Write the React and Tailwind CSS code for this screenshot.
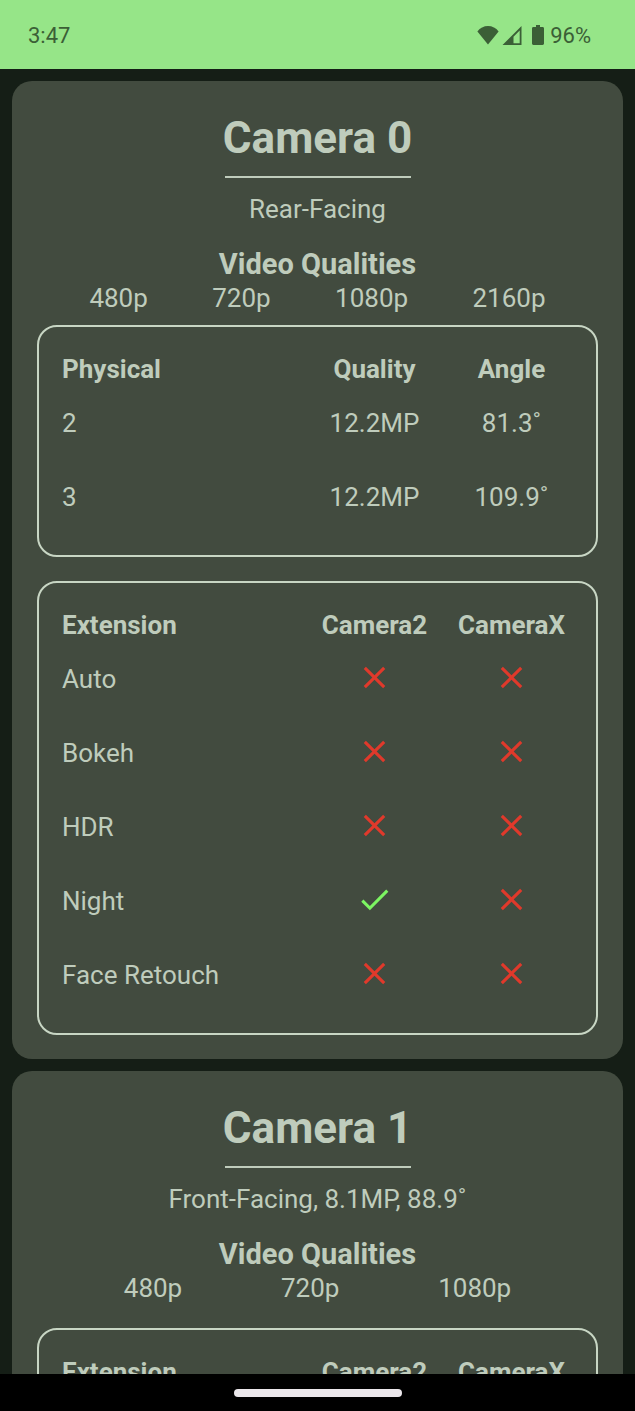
import { MdCheck, MdClose } from "react-icons/md";

const CAMERAS = [
  {
    id: 0,
    summary: "Rear-Facing",
    qualities: ["480p", "720p", "1080p", "2160p"],
    physical: [
      { id: "2", quality: "12.2MP", angle: "81.3˚" },
      { id: "3", quality: "12.2MP", angle: "109.9˚" },
    ],
    extensions: [
      { name: "Auto", camera2: false, cameraX: false },
      { name: "Bokeh", camera2: false, cameraX: false },
      { name: "HDR", camera2: false, cameraX: false },
      { name: "Night", camera2: true, cameraX: false },
      { name: "Face Retouch", camera2: false, cameraX: false },
    ],
  },
  {
    id: 1,
    summary: "Front-Facing, 8.1MP, 88.9˚",
    qualities: ["480p", "720p", "1080p"],
    physical: [],
    extensions: [
      { name: "Auto", camera2: false, cameraX: false },
      { name: "Bokeh", camera2: false, cameraX: false },
      { name: "HDR", camera2: false, cameraX: false },
      { name: "Night", camera2: true, cameraX: false },
      { name: "Face Retouch", camera2: false, cameraX: false },
    ],
  },
];

export default function App() {
  return (
    <div className="flex h-screen flex-col bg-[#151e16] font-[Roboto,sans-serif] text-[#bfccbc]">
      <StatusBar />
      <main className="flex min-h-0 flex-1 flex-col gap-3 overflow-y-auto px-3 pt-3 [scrollbar-width:none]">
        {CAMERAS.map((camera) => (
          <CameraCard key={camera.id} camera={camera} />
        ))}
      </main>
      <div className="flex h-[37px] shrink-0 items-center justify-center bg-black">
        <div className="h-2 w-[168px] rounded-full bg-[#ebe7eb]" />
      </div>
    </div>
  );
}

function StatusBar() {
  return (
    <header className="flex h-[69px] shrink-0 items-center justify-between bg-[#96e588] pr-11 pl-7 text-[22px] text-[#3b5f36]">
      <time className="pt-0.5">3:47</time>
      <div className="flex items-center">
        {/* Wi-Fi */}
        <svg viewBox="0 0 22 20" className="h-5 w-[22px]" fill="currentColor" aria-hidden>
          <path d="M11 19.5 0.4 6.4C3 3 6.8 1 11 1s8 2 10.6 5.4L11 19.5Z" />
        </svg>
        {/* Signal */}
        <svg viewBox="0 0 20 20" className="ml-[3px] h-5 w-5" aria-hidden>
          <path d="M0.5 20 19.5 1v19H0.5Zm11-1.8h6.2V5.4l-6.2 6.3v6.5Z" fill="currentColor" fillRule="evenodd" />
        </svg>
        {/* Battery */}
        <svg viewBox="0 0 12 20" className="mr-1.5 ml-2.5 h-5 w-3" fill="currentColor" aria-hidden>
          <path d="M4 0h4v2h2.6c.8 0 1.4.6 1.4 1.4v15.2c0 .8-.6 1.4-1.4 1.4H1.4C.6 20 0 19.4 0 18.6V3.4C0 2.6.6 2 1.4 2H4V0Z" />
        </svg>
        <span className="pt-0.5">96%</span>
      </div>
    </header>
  );
}

function CameraCard({ camera }) {
  return (
    <section className="shrink-0 rounded-[20px] bg-[#424b3f] px-[25px] pt-[25px] pb-6 text-center text-[26px] leading-[34px]">
      <h1 className="text-[44px] leading-[64px] font-bold">Camera {camera.id}</h1>
      <hr className="mx-auto mt-1.5 w-[186px] border-t-2 border-[#bfccbc]" />
      <p className="mt-3.5">{camera.summary}</p>

      <h2 className="mt-5 text-[29px] leading-9 font-bold">Video Qualities</h2>
      <ul className="-mx-3 flex justify-evenly leading-8">
        {camera.qualities.map((quality) => (
          <li key={quality}>{quality}</li>
        ))}
      </ul>

      {camera.physical.length > 0 && (
        <div className="mt-[11px]">
          <InfoTable
            columns={["Physical", "Quality", "Angle"]}
            rows={camera.physical.map((p) => [p.id, p.quality, p.angle])}
          />
        </div>
      )}
      <div className="mt-6">
        <InfoTable
          columns={["Extension", "Camera2", "CameraX"]}
          rows={camera.extensions.map((e) => [
            e.name,
            <Support supported={e.camera2} />,
            <Support supported={e.cameraX} />,
          ])}
        />
      </div>
    </section>
  );
}

function InfoTable({ columns, rows }) {
  return (
    <div className="rounded-[20px] border-2 border-[#c8d6c4] pt-[25px] pr-4 pb-[21px] pl-[23px]">
      <table className="w-full table-fixed">
        <thead>
          <tr className="h-[34px]">
            <th className="text-left font-bold">{columns[0]}</th>
            <th className="w-[137px] font-bold">{columns[1]}</th>
            <th className="w-[137px] font-bold">{columns[2]}</th>
          </tr>
        </thead>
        <tbody>
          {rows.map(([name, first, second]) => (
            <tr key={name} className="h-[74px]">
              <td className="text-left">{name}</td>
              <td>{first}</td>
              <td>{second}</td>
            </tr>
          ))}
        </tbody>
      </table>
    </div>
  );
}

function Support({ supported }) {
  return supported ? (
    <MdCheck className="mx-auto mb-1 size-[37px] text-[#7cf562]" title="Supported" />
  ) : (
    <MdClose className="mx-auto mb-1 size-[37px] text-[#e0392b]" title="Not supported" />
  );
}
